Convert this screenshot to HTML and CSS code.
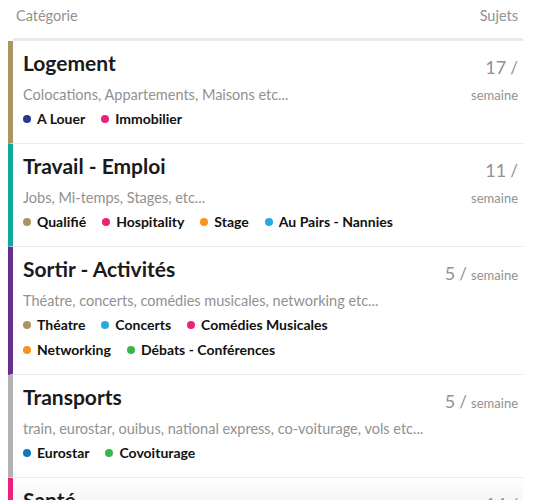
FILE: index.html
```html
<!DOCTYPE html>
<html lang="fr">
<head>
<meta charset="utf-8">
<title>Catégories</title>
<link rel="stylesheet" href="styles.css">
</head>
<body>
<div class="categories">
  <div class="head">
    <span>Catégorie</span>
    <span>Sujets</span>
  </div>

  <div class="row b-tan">
    <div class="main">
      <h3 class="title">Logement</h3>
      <p class="desc">Colocations, Appartements, Maisons etc...</p>
      <ul class="subs">
        <li><i class="dot d-navy"></i>A Louer</li>
        <li><i class="dot d-pink"></i>Immobilier</li>
      </ul>
    </div>
    <div class="topics"><span class="val">17</span> <span class="slash">/</span> <span class="unit">semaine</span></div>
  </div>

  <div class="row b-teal">
    <div class="main">
      <h3 class="title">Travail - Emploi</h3>
      <p class="desc">Jobs, Mi-temps, Stages, etc...</p>
      <ul class="subs">
        <li><i class="dot d-tan"></i>Qualifié</li>
        <li><i class="dot d-pink"></i>Hospitality</li>
        <li><i class="dot d-orange"></i>Stage</li>
        <li><i class="dot d-sky"></i>Au Pairs - Nannies</li>
      </ul>
    </div>
    <div class="topics"><span class="val">11</span> <span class="slash">/</span> <span class="unit">semaine</span></div>
  </div>

  <div class="row b-purple">
    <div class="main">
      <h3 class="title">Sortir - Activités</h3>
      <p class="desc">Théatre, concerts, comédies musicales, networking etc...</p>
      <ul class="subs">
        <li><i class="dot d-tan"></i>Théatre</li>
        <li><i class="dot d-sky"></i>Concerts</li>
        <li><i class="dot d-pink"></i>Comédies Musicales</li>
        <li><i class="dot d-orange"></i>Networking</li>
        <li><i class="dot d-green"></i>Débats - Conférences</li>
      </ul>
    </div>
    <div class="topics"><span class="val">5</span> <span class="slash">/</span> <span class="unit">semaine</span></div>
  </div>

  <div class="row b-gray">
    <div class="main">
      <h3 class="title">Transports</h3>
      <p class="desc">train, eurostar, ouibus, national express, co-voiturage, vols etc...</p>
      <ul class="subs">
        <li><i class="dot d-blue"></i>Eurostar</li>
        <li><i class="dot d-green"></i>Covoiturage</li>
      </ul>
    </div>
    <div class="topics"><span class="val">5</span> <span class="slash">/</span> <span class="unit">semaine</span></div>
  </div>

  <div class="row b-pink last">
    <div class="main">
      <h3 class="title">Santé</h3>
      <p class="desc">Médecins, dentistes, pharmacies etc...</p>
    </div>
    <div class="topics"><span class="val">14</span> <span class="slash">/</span> <span class="unit">semaine</span></div>
  </div>
</div>
</body>
</html>
```

FILE: styles.css
```css
html, body {
  margin: 0;
  padding: 0;
  background: #fff;
}

body {
  font-family: Lato, "Noto Sans", "DejaVu Sans", sans-serif;
  color: #222;
  overflow: hidden;
  height: 500px;
}

.categories {
  width: 515px;
  margin-left: 8px;
}

.head {
  display: flex;
  justify-content: space-between;
  height: 32px;
  padding: 6px 5px 0 3px;
  margin-left: 5px;
  font-size: 14.5px;
  line-height: 20px;
  color: #919191;
  border-bottom: 3px solid #e9e9e9;
}

.row {
  display: flex;
  border-left: 5px solid #b3b3b3;
  border-bottom: 1px solid #e9e9e9;
}

.main {
  flex: 1;
  min-width: 0;
  padding: 10px 12px 14px 10px;
}

.title {
  margin: 0;
  font-size: 21px;
  line-height: 24px;
  font-weight: 700;
  color: #1a1a1a;
}

.desc {
  margin: 10px 0 0;
  font-size: 14.5px;
  line-height: 20px;
  color: #919191;
}

.subs {
  list-style: none;
  margin: 4px 0 0;
  padding: 0;
  display: flex;
  flex-wrap: wrap;
  column-gap: 16px;
  row-gap: 5px;
}

.subs li {
  display: flex;
  align-items: center;
  gap: 6px;
  font-size: 14px;
  line-height: 20px;
  font-weight: 700;
  color: #111;
}

.dot {
  display: block;
  width: 8px;
  height: 8px;
  border-radius: 50%;
}

.topics {
  width: 78px;
  flex: none;
  padding: 13px 5px 0 0;
  text-align: right;
  line-height: 26px;
  color: #919191;
}

.val {
  font-size: 18px;
}

.slash {
  font-size: 17px;
}

.unit {
  font-size: 13px;
}

.last {
  background: linear-gradient(#ffffff, #f1f1f1 30px);
}

.b-tan { border-left-color: #ab9364; }
.b-teal { border-left-color: #12a89d; }
.b-purple { border-left-color: #652d90; }
.b-gray { border-left-color: #b3b3b3; }
.b-pink { border-left-color: #ed207b; }

.d-navy { background: #283890; }
.d-pink { background: #ed207b; }
.d-tan { background: #ab9364; }
.d-orange { background: #f7941d; }
.d-sky { background: #25aae2; }
.d-green { background: #3ab54a; }
.d-blue { background: #0e76bd; }
```
